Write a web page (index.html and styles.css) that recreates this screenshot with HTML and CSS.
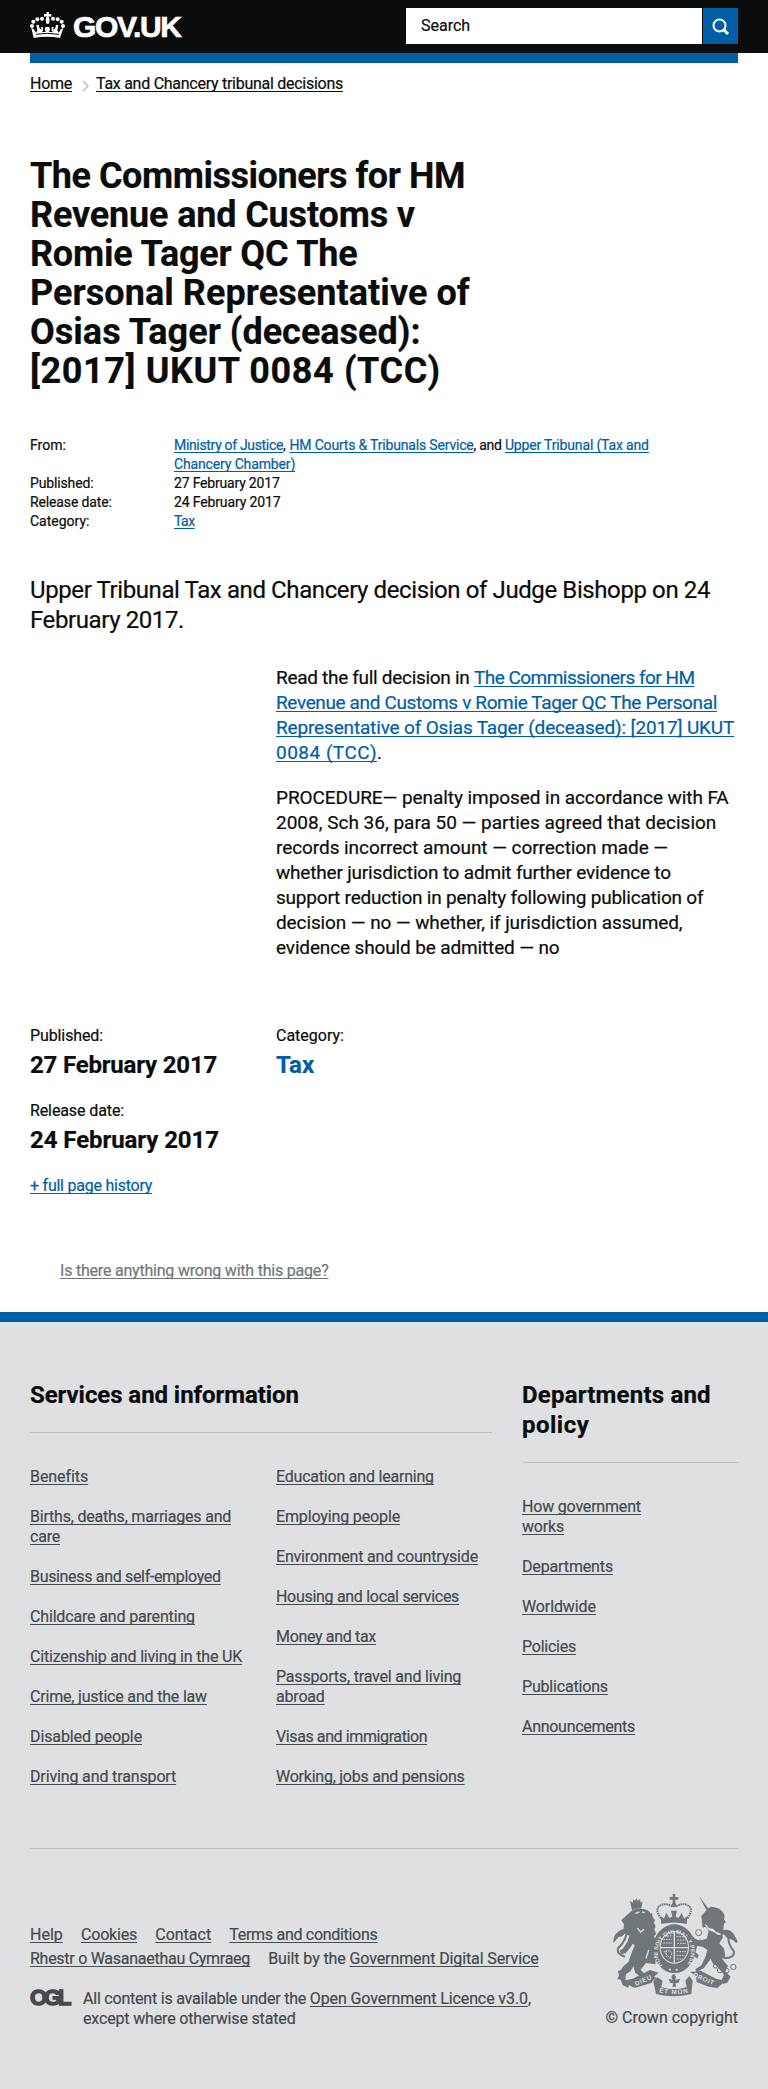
FILE: index.html
```
<!DOCTYPE html>
<html lang="en"><head><meta charset="utf-8"><title>The Commissioners for HM Revenue and Customs v Romie Tager QC - GOV.UK</title><link rel="stylesheet" href="styles.css"></head><body>
<header class="top"><div class="wrap top-in">
<a class="logo" href="#"><svg class="crown" viewBox="0 0 105 78" width="35" height="26"><g fill="#fff"><path d="M49 0h8l-1 7 8-1v8l-8-1 3 10-2 12h-8l-2-12 3-10-8 1V6l8 1z"/><circle cx="36" cy="20" r="6"/><circle cx="22" cy="22" r="6"/><circle cx="10" cy="29" r="6"/><circle cx="6" cy="42" r="6"/><circle cx="69" cy="20" r="6"/><circle cx="83" cy="22" r="6"/><circle cx="95" cy="29" r="6"/><circle cx="99" cy="42" r="6"/><path d="M4 48l7 3 7 11 4-7-3-15 7-2 2 10 7 6-2-9h6v12l-5 4 14-2-4-5 2-9h12l2 9-4 5 14 2-5-4V45h6l-2 9 7-6 2-10 7 2-3 15 4 7 7-11 7-3-10 30q-39-7-79 0z"/></g><path d="M18 67q34-6 69 0" fill="none" stroke="#0b0c0c" stroke-width="3"/></svg><svg class="word" width="116" height="28"><text x="0" y="25" textLength="109" lengthAdjust="spacing">GOV.UK</text></svg></a>
<form class="search"><div class="box"><span>Search</span></div><button class="go" type="button" aria-label="Search"><svg width="18" height="18" viewBox="0 0 18 18" fill="none" stroke="#fff"><circle cx="7.500" cy="7.500" r="6" stroke-width="2"/><path d="M12 12l4 4" stroke-width="3"/></svg></button></form>
</div></header>
<div class="wrap"><div class="bar"></div>
<nav class="crumbs"><a href="#" class="n27">Home</a><svg width="7" height="12" viewBox="0 0 7 12" fill="none" stroke="#bfc1c3" stroke-width="1.500"><path d="M1 1l5 5-5 5"/></svg><a href="#" class="n27">Tax and Chancery tribunal decisions</a></nav>
<h1 class="title"><span class="n46">The Commissioners for HM</span><br><span class="n16">Revenue and Customs v</span><br><span class="n19">Romie Tager QC The</span><br><span class="p06">Personal Representative of</span><br><span class="p01">Osias Tager (deceased):</span><br><span class="p60">[2017] UKUT 0084 (TCC)</span></h1>
<dl class="meta"><dt>From:</dt><dd><a href="#" class="n33">Ministry of Justice</a><span class="p13">, </span><a href="#" class="n18">HM Courts &amp; Tribunals Service</a><span class="n28">, and </span><a href="#" class="n16">Upper Tribunal (Tax and</a><br><a href="#" class="n15">Chancery Chamber)</a></dd>
<dt class="n15">Published:</dt><dd><span class="n19">27 February 2017</span></dd>
<dt class="n15">Release date:</dt><dd><span class="n15">24 February 2017</span></dd>
<dt>Category:</dt><dd><a href="#" class="n46">Tax</a></dd></dl>
<p class="lead"><span class="n40">Upper Tribunal Tax and Chancery decision of Judge Bishopp on 24</span><br><span class="n40">February 2017.</span></p>
<div class="body"><p><span class="n30">Read the full decision in </span><a href="#"><span class="n52">The Commissioners for HM</span><br><span class="n37">Revenue and Customs v Romie Tager QC The Personal</span><br><span class="n16">Representative of Osias Tager (deceased): [2017] UKUT</span><br><span class="p49">0084 (TCC)</span></a>.</p>
<p><span class="n07">PROCEDURE— penalty imposed in accordance with FA</span><br>2008, Sch 36, para 50 — parties agreed that decision<br><span class="n07">records incorrect amount — correction made —</span><br><span class="n19">whether jurisdiction to admit further evidence to</span><br><span class="n21">support reduction in penalty following publication of</span><br><span class="n11">decision — no — whether, if jurisdiction assumed,</span><br><span class="n15">evidence should be admitted — no</span></p></div>
<div class="facts"><dl><dt class="n11">Published:</dt><dd><span class="n19">27 February 2017</span></dd><dt class="n11">Release date:</dt><dd><span class="n07">24 February 2017</span></dd></dl><dl><dt>Category:</dt><dd><a class="plain" href="#">Tax</a></dd></dl></div>
<p><a href="#" class="n24">+ full page history</a></p>
<p class="wrong"><a href="#" class="n21">Is there anything wrong with this page?</a></p>
</div>
<footer class="foot"><div class="wrap">
<div class="cats"><section><h2 class="n07">Services and information</h2><div class="cols"><ul>
<li><a href="#" class="n07">Benefits</a></li><li><a href="#" class="n21">Births, deaths, marriages and<br>care</a></li><li><a href="#" class="n33">Business and self-employed</a></li><li><a href="#" class="n16">Childcare and parenting</a></li><li><a href="#" class="n18">Citizenship and living in the UK</a></li><li><a href="#" class="n19">Crime, justice and the law</a></li><li><a href="#" class="n11">Disabled people</a></li><li><a href="#" class="n15">Driving and transport</a></li></ul><ul>
<li><a href="#" class="n21">Education and learning</a></li><li><a href="#" class="n15">Employing people</a></li><li><a href="#" class="n19">Environment and countryside</a></li><li><a href="#" class="n30">Housing and local services</a></li><li><a href="#" class="n33">Money and tax</a></li><li><a href="#" class="n19">Passports, travel and living<br>abroad</a></li><li><a href="#" class="n40">Visas and immigration</a></li><li><a href="#" class="n24">Working, jobs and pensions</a></li></ul></div></section>
<section><h2><span class="p20">Departments and</span><br><span class="p49">policy</span></h2><ul>
<li><a href="#" class="n19">How government<br>works</a></li><li><a href="#" class="n15">Departments</a></li><li><a href="#" class="n11">Worldwide</a></li><li><a href="#" class="n24">Policies</a></li><li><a href="#" class="n18">Publications</a></li><li><a href="#" class="n28">Announcements</a></li></ul></section></div>
<div class="legal"><div><p class="links"><a href="#">Help</a><a href="#" class="n19">Cookies</a><a href="#">Contact</a><a href="#" class="n30">Terms and conditions</a></p><p class="links"><a href="#" class="n27">Rhestr o Wasanaethau Cymraeg</a><span class="n11">Built by the <a href="#">Government Digital Service</a></span></p>
<div class="licence"><svg class="ogl" width="46" height="22"><text x="0" y="17.500" textLength="41.500" lengthAdjust="spacing">OGL</text></svg><p><span class="n21">All content is available under the </span><a href="#" class="n11">Open Government Licence v3.0</a>,<br><span class="n16">except where otherwise stated</span></p></div></div>
<div class="crest"><svg width="125" height="102" viewBox="69 42 375 306"><g fill="#6f777b">
<path d="M248 42h8v9h9v8h-9v12h-8V59h-9v-8h9z"/><circle cx="252" cy="75" r="7"/>
<path d="M212 108l10 8 7-18 9 16 9-4-4-18h18l-4 18 9 4 9-16 7 18 10-8-2 24q-38-9-76 0z"/>
<path d="M120 62l8 6 2-10 6 4 3-8 4 8 7-4 2 10 6-4-4 22q-16-2-28 5z"/>
<path d="M121 96q14-12 36-9 17 0 25 14l4-2 2 13 7 8-3 8 5 12-4 8 5 13-6 8 8 20 6 22-6 20-4 22-28-4-16 20 12 14 22 6 14 4-8 8-30-4-26-18-6-20-8 14-14 10-2 20 12 10-4 10-16-8-6-16-10-2 5-12-3-12 8-2 8-12 16-14 8-24 10-26-6-4-6 10-14 18-14 4-6-10 12-8 12-20 6-18-10-4-8-12 2-18-8-12 6-6z"/>
<path d="M70 184q0-18 14-28 14-12 34-9l-12 6 4 4-14 12-10 2-16 18z"/>
<path d="M327 48l29 39-7 3z"/>
<path d="M334 108l16-18 12-10 12 2 14 4 12 12 4 10-2 10 6 8-6 6-4 26 0 16-10 16 14 16 4 22-10 8 18 22-8 16 16 16-10 18-14 4-2-14 6-14-20-24-14-10-6-14-20 28-22 12-4-8 18-12 12-24 6-22-14-10-16-2-6 18 10 10-4 10-14-12-4-18 6-16-10-14-12 8-4-6 18-14 14 12 12 6 22-6 6-22-10-14-8 4z"/>
<path d="M397 150q24-4 34 12l12 22-4 6-10-10-18-6-8-10-10-4z"/>
<path d="M190 304l12-12 16 10-4 20 24 5h26l26-5-4-20 12-14 10 14-4 40q-54 14-106 0z"/>
<path d="M98 302l30-6 52-26 26 8-14 12-6 18-50 15-8-1z"/><path d="M406 302l-28-6-46-24-32 4 18 12 2 18 36 14 26 4z"/>
<path d="M248 284l5-2 5 8-2 10 14-4-4 12-10 2 3 10h-12l3-10-10-2-4-12 12 4-4-10z"/></g>
<g fill="none" stroke="#6f777b"><path d="M213 115q-18-24-6-36 16-13 40 0m45 36q18-24 6-36-16-13-40 0" stroke-width="6" stroke-dasharray="5 2"/><path d="M214 127q38-9 76 0" stroke-width="5"/><path d="M105 230q-28-8-20-26 24-22 26-52M400 234q34 2 32-20-20-24-16-46" stroke-width="6"/><circle cx="326" cy="158" r="9" stroke-width="3"/><circle cx="330" cy="186" r="6" stroke-width="3"/><circle cx="376" cy="258" r="6" stroke-width="3"/><circle cx="390" cy="270" r="8" stroke-width="3"/><circle cx="410" cy="272" r="7" stroke-width="3"/><circle cx="430" cy="261" r="8" stroke-width="3"/></g>
<ellipse cx="253" cy="206" rx="64" ry="73" fill="#6f777b"/><ellipse cx="253" cy="202" rx="44" ry="49" fill="#dee0e2"/><ellipse cx="253" cy="202" rx="41" ry="46" fill="#6f777b"/>
<path d="M253 155v94M211 203h84" stroke="#dee0e2" stroke-width="4"/><path d="M220 178h26M220 189h26M224 168h20M260 170h22M262 180h28M262 190h26M260 215h28M260 226h26M261 237h18M222 214l18 22 6-16-6-8zM229 212v18" fill="none" stroke="#dee0e2" stroke-width="3" stroke-dasharray="5 3"/>
<path d="M136 100l12-4m8 0l8 2M176 210l-8 26m-26-92l10 12 10-8M346 134l10 12 12 2 14 14 10 2M350 145l42 18" fill="none" stroke="#dee0e2" stroke-width="4"/><path d="M237 268l6 2m14 0l6-1" stroke="#dee0e2" stroke-width="5"/>
<path id="gp" d="M217 256A50 56 0 1 1 289 256" fill="none"/><path id="d1" d="M138 318l54-24" fill="none"/><path id="d2" d="M207 337q46 10 92 0" fill="none"/><path id="d3" d="M308 289l64 28" fill="none"/>
<g class="motto"><text class="garter"><textPath href="#gp" textLength="246">HONI SOIT QUI MAL Y PENSE</textPath></text><text><textPath href="#d1" textLength="52">DIEU</textPath></text><text><textPath href="#d2" textLength="88">ET MON</textPath></text><text><textPath href="#d3" textLength="66">DROIT</textPath></text></g></svg><a class="plain" href="#">© Crown copyright</a></div></div>
</div></footer>
</body></html>
```
FILE: styles.css
```
*{box-sizing:border-box}
body{margin:0;background:#fff;color:#0b0c0c;font:16px/20px Roboto,"Liberation Sans",sans-serif;white-space:nowrap;-webkit-text-stroke:.2px}
h1,h2,p,ul,dl,dd{margin:0;padding:0}
ul{list-style:none}
svg{display:block;flex:none;overflow:visible}
a{color:#005ea5;text-decoration:underline;text-decoration-thickness:1px;text-underline-offset:2px;text-decoration-skip-ink:none}
a.plain{text-decoration:none}

/* Tracking steps, in hundredths of a pixel */
.n07{letter-spacing:-.07px}
.n11{letter-spacing:-.11px}
.n15{letter-spacing:-.14px}
.n16{letter-spacing:-.16px}
.n18{letter-spacing:-.18px}
.n19{letter-spacing:-.19px}
.n21{letter-spacing:-.21px}
.n24{letter-spacing:-.24px}
.n27{letter-spacing:-.27px}
.n28{letter-spacing:-.28px}
.n30{letter-spacing:-.3px}
.n33{letter-spacing:-.33px}
.n37{letter-spacing:-.37px}
.n40{letter-spacing:-.4px}
.n46{letter-spacing:-.46px}
.n52{letter-spacing:-.52px}
.p01{letter-spacing:.01px}
.p06{letter-spacing:.06px}
.p13{letter-spacing:.13px}
.p20{letter-spacing:.2px}
.p49{letter-spacing:.49px}
.p60{letter-spacing:.6px}

.wrap{width:708px;margin:0 auto}
.top{background:#0b0c0c;height:53px}
.top-in{display:flex;justify-content:space-between;padding-top:8px}
.logo{display:flex;gap:8px;padding-top:4px;height:36px}
.word text{font:700 30px "Liberation Sans",sans-serif;fill:#fff;stroke:#fff;stroke-width:.7px}
.search{display:flex;gap:1px;height:36px}
.box{width:296px;background:#fff;padding:8px 15px}
.go{width:35px;border:0;padding:1px 0 0;background:#005ea5;display:flex;align-items:center;justify-content:center}
.bar{height:10px;background:#005ea5}
.crumbs{display:flex;align-items:flex-start;padding-top:11px;height:94px}
.crumbs a{color:#0b0c0c}
.crumbs svg{margin:6px 7px 0 10px}
.title{font-size:36px;line-height:39px;font-weight:700}
.meta{display:grid;grid-template-columns:144px 1fr;font-size:14px;line-height:19px;padding-top:45px}
.lead{font-size:24px;line-height:30px;margin-top:44px}
.body{font-size:19px;line-height:25px;margin:30px 0 0 246px;display:grid;gap:20px}
.facts{display:grid;grid-template-columns:216px 216px;gap:30px;margin-top:66px}
.facts dd{font-size:24px;line-height:30px;font-weight:700;padding:4px 0 21px;height:55px}
.wrong{margin:65px 0 31px 30px}
.wrong a{color:#6f777b}
.foot{background:#dee0e2;border-top:10px solid #005ea5;height:777px;color:#454a4c}
.foot a{color:#454a4c}
.cats{display:grid;grid-template-columns:462px 216px;gap:30px;padding-top:58px;height:527px;border-bottom:1px solid #bfc1c3}
.cats h2{color:#0b0c0c;font-size:24px;line-height:30px;padding-bottom:22px;border-bottom:1px solid #bfc1c3;margin-bottom:34px}
.cols{display:grid;grid-template-columns:216px 216px;gap:30px}
.cats ul{display:flex;flex-direction:column;gap:20px;align-items:flex-start;align-self:start}
.legal{display:flex;justify-content:space-between}
.legal>div:first-child{padding-top:74px}
.links{display:flex;gap:18.200px;line-height:24px}
.licence{display:flex;gap:7px;padding-top:18px}
.ogl{margin-top:-2px}
.ogl text{font:700 22px "Liberation Sans",sans-serif;fill:#454a4c;stroke:#454a4c;stroke-width:1.400px}
.crest{display:flex;flex-direction:column;align-items:flex-end;gap:12px;padding-top:45px}
.motto{font:700 19px "Liberation Sans",sans-serif;fill:#dee0e2;-webkit-text-stroke:0}
.garter{font-size:17px}
```
